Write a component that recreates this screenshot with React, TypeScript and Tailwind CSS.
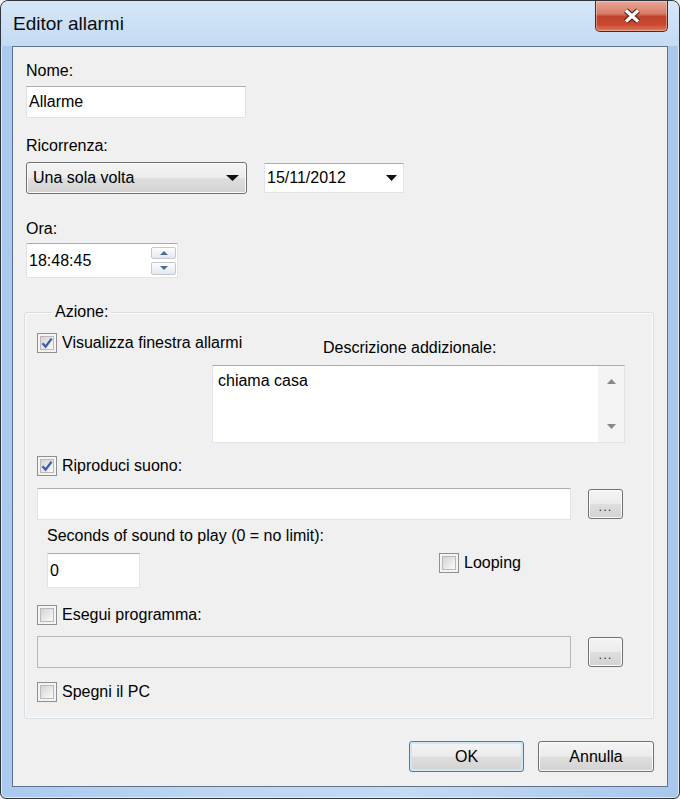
import React from "react";

const field = "bg-white border border-[#e2e3ea] border-t-[#abadb3]";
const winBtn =
  "rounded-[3px] border bg-[linear-gradient(#f4f4f4,#ececec_48%,#dedede_52%,#d2d2d2)] shadow-[inset_0_0_0_1px_#fbfbfb] flex items-center justify-center";

const Check: React.FC<{ checked?: boolean }> = ({ checked }) => (
  <div className="w-[20px] h-[20px] shrink-0 border border-[#8e8f8f] bg-[#f4f4f4] p-[2px]">
    <div className="w-full h-full border border-[#b9b9b9] bg-linear-to-br from-[#d3d3d3] to-[#fbfbfb] flex items-center justify-center">
      {checked && (
        <svg width="12" height="12" viewBox="0 0 12 12">
          <path d="M1.5 6.2 L4.6 9.6 L10.6 1.6" fill="none" stroke="#3d5da8" strokeWidth="2.3" />
        </svg>
      )}
    </div>
  </div>
);

const CheckLabel: React.FC<{ checked?: boolean; text: string }> = ({ checked, text }) => (
  <label className="flex items-center gap-[5px] h-[20px]">
    <Check checked={checked} />
    <span className="leading-[18px]">{text}</span>
  </label>
);

const DownArrow: React.FC<{ w?: number }> = ({ w = 12 }) => (
  <svg width={w} height="6" viewBox={`0 0 ${w} 6`}>
    <polygon points={`0,0 ${w},0 ${w / 2},6`} fill="#111" />
  </svg>
);

const Dots: React.FC = () => (
  <div className={`${winBtn} border-[#707070] w-[35px] h-[30px] ml-[17px]`}>
    <span className="text-[13px] leading-[13px] mt-[5px] tracking-[1px] text-[#333]">...</span>
  </div>
);

const App: React.FC = () => {
  return (
    <div className="w-[680px] h-[799px] font-['Liberation_Sans',Arial,sans-serif] text-[16px] text-black bg-[#f0f0f0]">
      <div className="w-full h-full flex flex-col rounded-t-[8px] rounded-b-[6px] border border-[#2f353d] bg-[linear-gradient(90deg,#a9c9ee,#bcd6f2_30%,#c3daf3_60%,#a8c7ec)] shadow-[inset_0_0_0_1px_rgba(255,255,255,0.6)] overflow-hidden">
        {/* title bar */}
        <div className="h-[45px] flex items-start bg-[linear-gradient(180deg,#d5e6f8,#c4dbf3)] rounded-t-[7px]">
          <div className="pl-[12px] pt-[12px] text-[19px] leading-[22px] text-[#0c0c0c]">Editor allarmi</div>
          <div className="ml-auto mr-[11px] w-[73px] h-[31px] rounded-b-[5px] border border-t-0 border-[#5b2219] bg-[linear-gradient(#eaa797,#d77c66_42%,#c2402a_52%,#c9492f_78%,#de7a5c)] shadow-[inset_0_0_0_1px_rgba(255,220,210,0.45)] flex items-center justify-center">
            <svg width="20" height="16" viewBox="0 0 20 16">
              <path d="M4 2.5 L16 13.5 M16 2.5 L4 13.5" stroke="#4b1a12" strokeWidth="5.6" />
              <path d="M4 2.5 L16 13.5 M16 2.5 L4 13.5" stroke="#ffffff" strokeWidth="3.4" />
            </svg>
          </div>
        </div>

        {/* client area */}
        <div className="mx-[11px] h-[741px] border border-[#5f738a] bg-[#f0f0f0] px-[11px] flex flex-col">
          <div className="pl-[2px] flex flex-col">
            <div className="mt-[15px] leading-[18px]">Nome:</div>
            <div className={`mt-[6px] w-[220px] h-[32px] ${field} flex items-center pl-[2px]`}>Allarme</div>

            <div className="mt-[19px] leading-[18px]">Ricorrenza:</div>
            <div className="mt-[7px] flex items-center">
              <div className={`${winBtn} border-[#707070] w-[221px] h-[32px] !justify-between pl-[6px] pr-[7px]`}>
                <span>Una sola volta</span>
                <DownArrow w={13} />
              </div>
              <div className={`ml-[17px] w-[140px] h-[30px] ${field} flex items-center justify-between pl-[2px] pr-[6px]`}>
                <span>15/11/2012</span>
                <DownArrow w={11} />
              </div>
            </div>

            <div className="mt-[26px] leading-[18px]">Ora:</div>
            <div className={`mt-[5px] w-[152px] h-[35px] ${field} flex items-center justify-between pl-[2px] pr-[1px]`}>
              <span>18:48:45</span>
              <div className="flex flex-col gap-[3px]">
                <div className="w-[25px] h-[12px] border border-[#c3c8d0] rounded-[2px] bg-linear-to-b from-[#fdfdfd] to-[#e4e8ee] flex items-center justify-center">
                  <svg width="8" height="4" viewBox="0 0 8 4"><polygon points="0,4 8,4 4,0" fill="#4f6a9c" /></svg>
                </div>
                <div className="w-[25px] h-[13px] border border-[#c3c8d0] rounded-[2px] bg-linear-to-b from-[#fdfdfd] to-[#e4e8ee] flex items-center justify-center">
                  <svg width="8" height="4" viewBox="0 0 8 4"><polygon points="0,0 8,0 4,4" fill="#4f6a9c" /></svg>
                </div>
              </div>
            </div>
          </div>

          {/* Azione group */}
          <fieldset className="mt-[25px] w-[630px] border border-[#d5dfe5] rounded-[3px] shadow-[inset_0_0_0_1px_#fbfbfb] pl-[12px] pb-[16px]">
            <legend className="ml-[15px] px-[3px] leading-[18px]">Azione:</legend>

            <div className="mt-[12px] flex items-start">
              <div className="w-[286px]">
                <CheckLabel checked text="Visualizza finestra allarmi" />
              </div>
              <div className="pt-[6px] leading-[18px]">Descrizione addizionale:</div>
            </div>
            <div className={`mt-[8px] ml-[175px] w-[413px] h-[78px] ${field} flex`}>
              <div className="flex-1 pl-[5px] pt-[6px] leading-[18px]">chiama casa</div>
              <div className="w-[26px] h-full bg-[#f4f4f4] flex flex-col items-center justify-between py-[13px]">
                <svg width="9" height="5" viewBox="0 0 9 5"><polygon points="0,5 9,5 4.5,0" fill="#888" /></svg>
                <svg width="9" height="5" viewBox="0 0 9 5"><polygon points="0,0 9,0 4.5,5" fill="#888" /></svg>
              </div>
            </div>

            <div className="mt-[13px]">
              <CheckLabel checked text="Riproduci suono:" />
            </div>
            <div className="mt-[12px] flex items-center">
              <div className={`w-[534px] h-[32px] ${field}`} />
              <Dots />
            </div>

            <div className="mt-[7px] ml-[10px] leading-[18px]">Seconds of sound to play (0 = no limit):</div>
            <div className="mt-[8px] flex items-start">
              <div className={`ml-[10px] w-[93px] h-[35px] ${field} flex items-center pl-[2px]`}>0</div>
              <div className="ml-[299px]">
                <CheckLabel text="Looping" />
              </div>
            </div>

            <div className="mt-[17px]">
              <CheckLabel text="Esegui programma:" />
            </div>
            <div className="mt-[11px] flex items-center">
              <div className="w-[534px] h-[32px] border border-[#b4b8bc] bg-[#f0f0f0]" />
              <Dots />
            </div>

            <div className="mt-[14px]">
              <CheckLabel text="Spegni il PC" />
            </div>
          </fieldset>

          <div className="mt-[22px] w-[630px] flex justify-end gap-[14px]">
            <div className={`${winBtn} border-[#3c7fb1] shadow-[inset_0_0_0_2px_#cfe8f7] w-[115px] h-[31px]`}>OK</div>
            <div className={`${winBtn} border-[#707070] w-[116px] h-[31px]`}>Annulla</div>
          </div>
        </div>

        {/* bottom frame */}
        <div className="flex-1" />
      </div>
    </div>
  );
};

export default App;
